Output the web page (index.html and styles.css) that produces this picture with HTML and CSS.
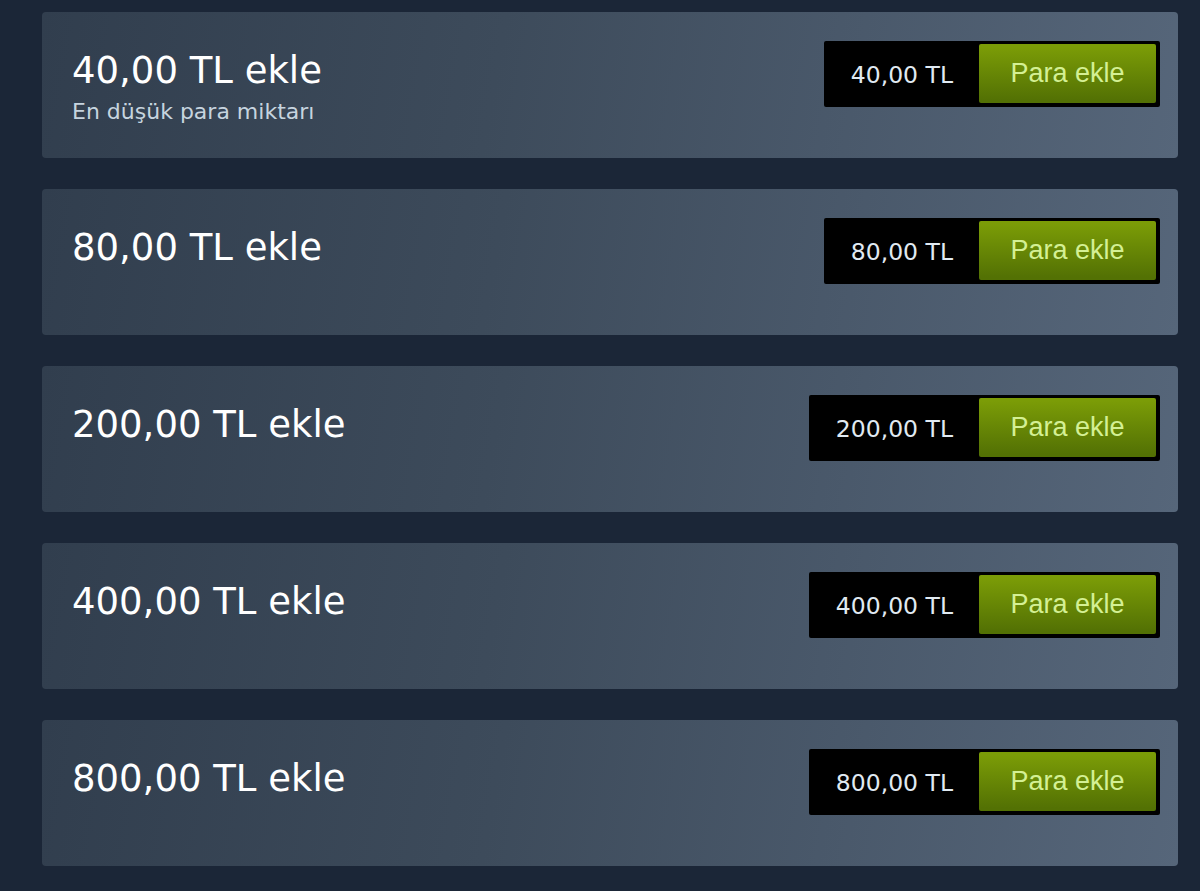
FILE: index.html
```html
<!DOCTYPE html>
<html lang="tr">
<head>
<meta charset="utf-8">
<title>Cüzdan</title>
<link rel="stylesheet" href="styles.css">
</head>
<body>
<div class="list">
  <div class="card">
    <div class="info">
      <div class="title">40,00 TL ekle</div>
      <div class="sub">En düşük para miktarı</div>
    </div>
    <div class="action">
      <div class="price">40,00 TL</div>
      <a class="btn">Para ekle</a>
    </div>
  </div>
  <div class="card">
    <div class="info">
      <div class="title">80,00 TL ekle</div>
    </div>
    <div class="action">
      <div class="price">80,00 TL</div>
      <a class="btn">Para ekle</a>
    </div>
  </div>
  <div class="card">
    <div class="info">
      <div class="title">200,00 TL ekle</div>
    </div>
    <div class="action">
      <div class="price">200,00 TL</div>
      <a class="btn">Para ekle</a>
    </div>
  </div>
  <div class="card">
    <div class="info">
      <div class="title">400,00 TL ekle</div>
    </div>
    <div class="action">
      <div class="price">400,00 TL</div>
      <a class="btn">Para ekle</a>
    </div>
  </div>
  <div class="card">
    <div class="info">
      <div class="title">800,00 TL ekle</div>
    </div>
    <div class="action">
      <div class="price">800,00 TL</div>
      <a class="btn">Para ekle</a>
    </div>
  </div>
</div>
</body>
</html>
```

FILE: styles.css
```css
html, body {
  margin: 0;
  padding: 0;
  background: #1b2637;
  height: 100%;
}

body {
  font-family: "DejaVu Sans", "Noto Sans", Arial, sans-serif;
  color: #ffffff;
}

.list {
  display: flex;
  flex-direction: column;
  gap: 31px;
  padding: 12px 0 0 42px;
  width: 1136px;
}

.card {
  box-sizing: border-box;
  height: 146px;
  display: flex;
  justify-content: space-between;
  align-items: flex-start;
  padding: 29px 18px 0 30px;
  border-radius: 4px;
  background: linear-gradient(100deg, #313e4e 0%, #3d4b5b 40%, #56667a 100%);
}

.info {
  display: flex;
  flex-direction: column;
  padding-top: 10px;
}

.title {
  font-size: 37px;
  line-height: 40px;
  font-weight: 400;
  color: #ffffff;
}

.sub {
  margin-top: 9px;
  font-size: 22px;
  line-height: 24px;
  color: #c6d4df;
}

.action {
  display: flex;
  align-items: center;
  background: #000000;
  border-radius: 2px;
  height: 66px;
  box-sizing: border-box;
  padding: 3px 4px 4px 27px;
  gap: 26px;
}

.price {
  font-size: 23.5px;
  color: #e0eaf2;
  padding-top: 2px;
}

.btn {
  display: flex;
  align-items: center;
  justify-content: center;
  width: 177px;
  height: 59px;
  border-radius: 2px;
  background: linear-gradient(to bottom, #7b9c07 5%, #537104 95%);
  color: #d4f094;
  font-family: "Liberation Sans", Arial, sans-serif;
  font-size: 27px;
  cursor: pointer;
}
```
